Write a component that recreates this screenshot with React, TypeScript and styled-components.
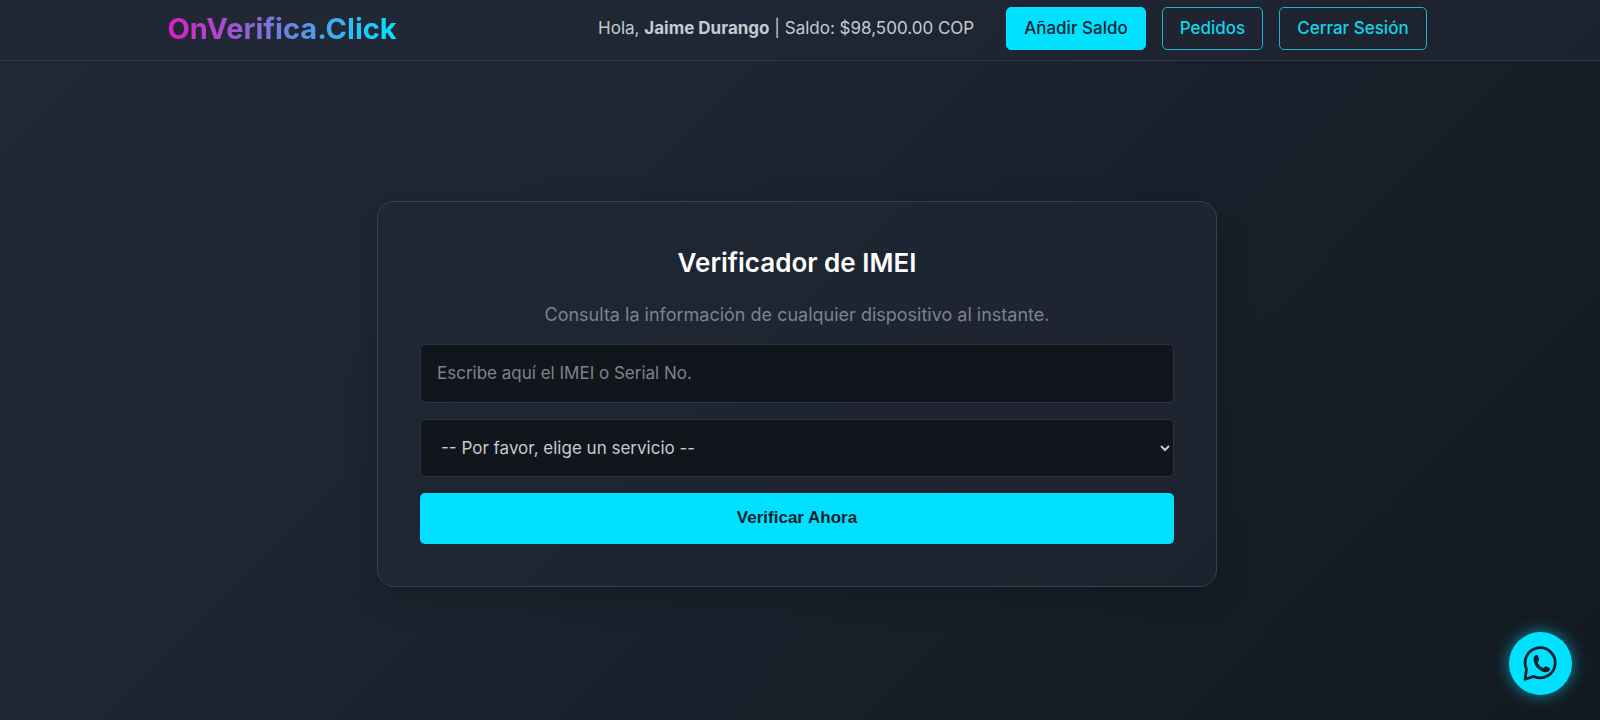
import React from "react";
import styled, { createGlobalStyle, css } from "styled-components";

const GlobalStyle = createGlobalStyle`
  *, *::before, *::after { box-sizing: border-box; }
  body {
    margin: 0;
    color: #c5cad3;
    font-family: Inter, "Open Sans", sans-serif;
    font-size: 17px;
    line-height: 27px;
    background: #171c26;
  }
`;

const Page = styled.div`
  display: flex;
  flex-direction: column;
  min-height: 100vh;
  background: linear-gradient(135deg, #1f2937 0%, #1e2733 30%, #1a212c 55%, #121921 100%);
`;

const Header = styled.header`
  padding: 7px 6px 10px 0;
  background: rgba(34, 39, 53, 0.5);
  border-bottom: 1px solid #2e3641;
`;

const HeaderInner = styled.div`
  display: flex;
  align-items: center;
  justify-content: space-between;
  width: 79%;
  max-width: 1260px;
  margin: 0 auto;
`;

const Logo = styled.a`
  font-size: 29px;
  font-weight: 700;
  line-height: 40px;
  text-decoration: none;
  color: transparent;
  background: linear-gradient(90deg, #e01cc0, #00e5ff);
  background-clip: text;
`;

const Nav = styled.nav`
  display: flex;
  align-items: center;
  gap: 16px;
`;

const Greeting = styled.span`
  margin-right: 16px;
`;

const NavLink = styled.a<{ $solid?: boolean }>`
  padding: 7px 17px;
  border: 1px solid #1fb4c9;
  border-radius: 5px;
  font-weight: 500;
  color: #14d3ec;
  text-decoration: none;
  ${(p) =>
    p.$solid &&
    css`
      border-color: #00e1ff;
      background: #00e1ff;
      color: #0f2430;
    `}
`;

const Main = styled.main`
  flex: 1;
  display: flex;
  align-items: center;
  justify-content: center;
  padding: 40px 6px 34px 0;
`;

const Card = styled.form`
  display: flex;
  flex-direction: column;
  gap: 16px;
  width: 100%;
  max-width: 840px;
  padding: 42px;
  border: 1px solid #383f4a;
  border-radius: 17px;
  background: rgba(34, 40, 54, 0.6);
  box-shadow: 0 8px 34px rgba(0, 0, 0, 0.2);
`;

const Title = styled.h1`
  margin: 0;
  font-size: 26px;
  font-weight: 600;
  line-height: 38px;
  text-align: center;
  color: #fff;
`;

const Subtitle = styled.p`
  margin: 3px 0 0;
  font-size: 18px;
  text-align: center;
  color: #7d828d;
`;

const field = css`
  width: 100%;
  border: 1px solid #2e343d;
  border-radius: 5px;
  background: #11161c;
  color: #c5cad3;
  font-family: inherit;
  font-size: 17px;
`;

const Input = styled.input`
  ${field}
  height: 59px;
  padding: 0 16px;
  &::placeholder { color: #7e838b; opacity: 1; }
`;

const Select = styled.select`
  ${field}
  height: 58px;
  padding: 0 0 0 16px;
`;

const Submit = styled.button`
  height: 51px;
  border: 0;
  border-radius: 5px;
  background: #00e1ff;
  color: #10202c;
  font-family: "Liberation Sans", Arial, sans-serif;
  font-size: 17px;
  font-weight: 700;
  cursor: pointer;
`;

const Chat = styled.a`
  position: fixed;
  right: 28px;
  bottom: 25px;
  display: grid;
  place-items: center;
  width: 63px;
  height: 63px;
  border-radius: 50%;
  background: #00e1ff;
  color: #10202c;
  box-shadow: 0 0 16px rgba(0, 225, 255, 0.6);
`;

function WhatsAppIcon() {
  return (
    <svg width="35" height="35" viewBox="0 0 100 100" aria-hidden="true">
      <path
        d="M6 95 L10 66 A43 43 0 1 1 31 87 Z"
        fill="none"
        stroke="currentColor"
        strokeWidth="8"
        strokeLinejoin="round"
      />
      <path
        d="M35 27 C38 25 42 26 43 29 L46 38 C47 41 43 44 42 47 C45 55 51 60 58 63 C61 62 63 58 66 58 L75 62 C79 64 77 70 73 73 C67 77 58 75 49 69 C40 63 33 54 31 44 C29 36 31 30 35 27 Z"
        fill="currentColor"
      />
    </svg>
  );
}

export default function App() {
  return (
    <Page>
      <GlobalStyle />
      <Header>
        <HeaderInner>
          <Logo href="#">OnVerifica.Click</Logo>
          <Nav>
            <Greeting>
              Hola, <strong>Jaime Durango</strong> | Saldo: $98,500.00 COP
            </Greeting>
            <NavLink href="#saldo" $solid>Añadir Saldo</NavLink>
            <NavLink href="#pedidos">Pedidos</NavLink>
            <NavLink href="#salir">Cerrar Sesión</NavLink>
          </Nav>
        </HeaderInner>
      </Header>
      <Main>
        <Card onSubmit={(e) => e.preventDefault()}>
          <Title>Verificador de IMEI</Title>
          <Subtitle>Consulta la información de cualquier dispositivo al instante.</Subtitle>
          <Input type="text" aria-label="IMEI o Serial No." placeholder="Escribe aquí el IMEI o Serial No." />
          <Select aria-label="Servicio" defaultValue="">
            <option value="">-- Por favor, elige un servicio --</option>
          </Select>
          <Submit type="submit">Verificar Ahora</Submit>
        </Card>
      </Main>
      <Chat href="#chat" aria-label="WhatsApp">
        <WhatsAppIcon />
      </Chat>
    </Page>
  );
}
